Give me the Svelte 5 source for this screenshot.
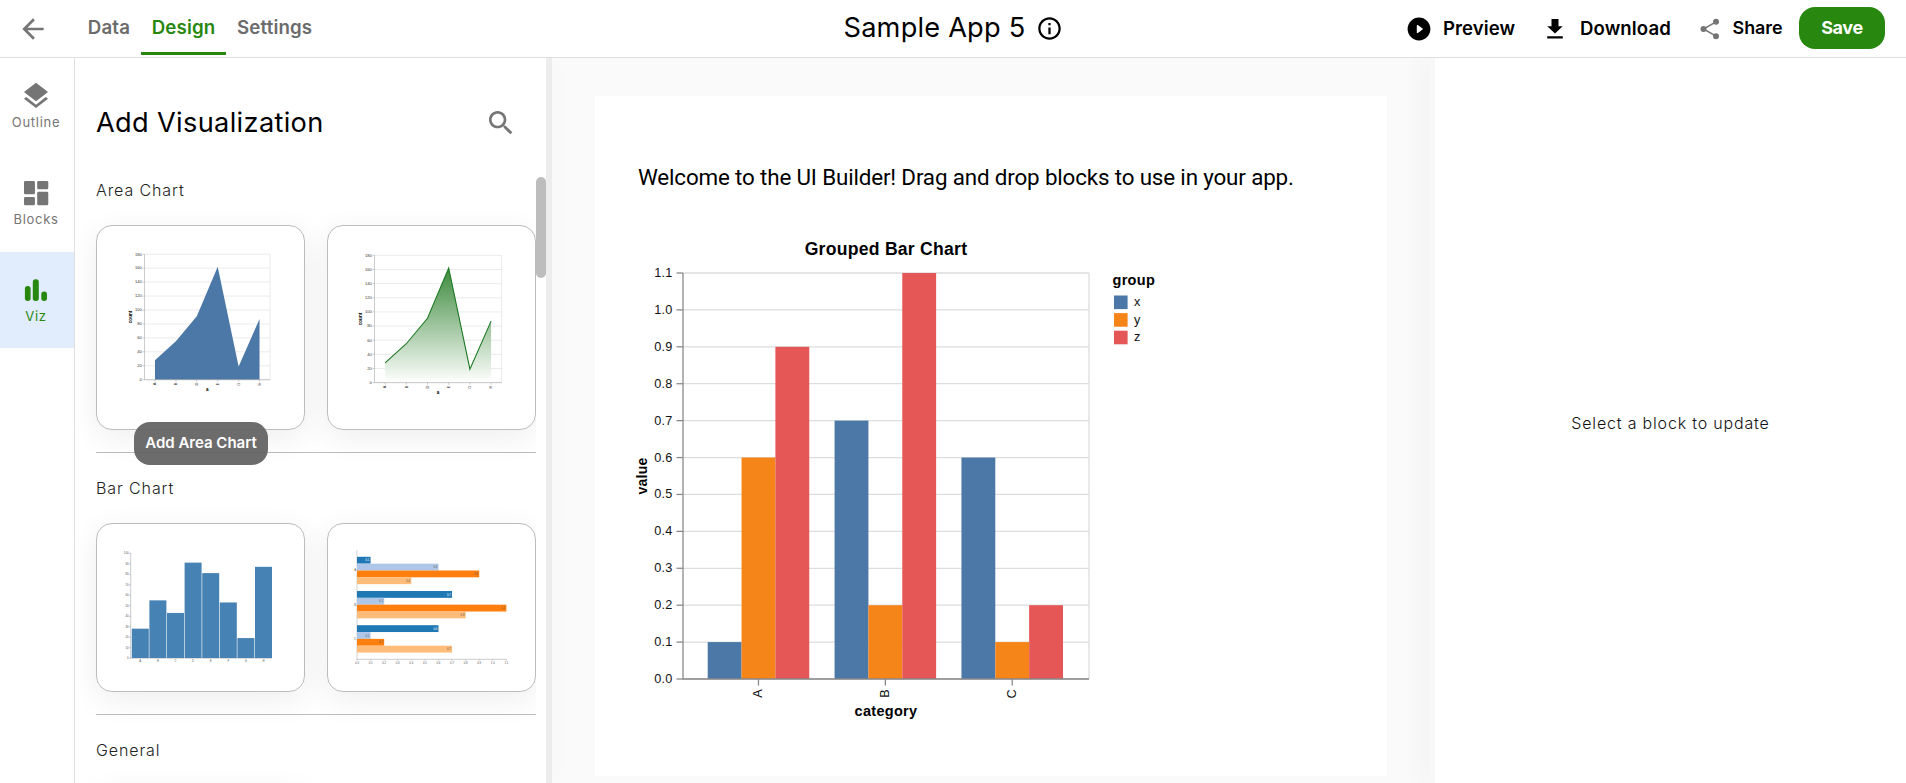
<script>
  const yTicks = Array.from({ length: 12 }, (_, i) => i / 10);
  const groups = [
    { name: 'A', values: [0.1, 0.6, 0.9] },
    { name: 'B', values: [0.7, 0.2, 1.1] },
    { name: 'C', values: [0.6, 0.1, 0.2] }
  ];
  const colors = ['#4c78a8', '#f58518', '#e45756'];
  const plot = { x: 45, y: 37, size: 406 };
  const step = plot.size / 11;
  const band = plot.size / 3.2;
  const bar = 33.85;

  const areaValues = [28, 55, 91, 162, 19, 87];
  const areaNames = ['A', 'B', 'D', 'E', 'G', 'H'];
  const areaTicks = Array.from({ length: 10 }, (_, i) => i * 20);
  const areas = [
    { id: 'solid', x: 47.5, y: 28.2, size: 125.5 },
    { id: 'gradient', x: 46.5, y: 29.4, size: 127.2 }
  ];
  function areaLine(a) {
    return areaValues
      .map((v, i) => `${a.x + (a.size / 12) * (2 * i + 1)},${a.y + a.size - (v / 180) * a.size}`)
      .join(' ');
  }
  function areaShape(a) {
    const base = a.y + a.size;
    return `${a.x + a.size / 12},${base} ${areaLine(a)} ${a.x + (a.size * 11) / 12},${base}`;
  }

  const barValues = [28, 55, 43, 91, 81, 53, 19, 87];
  const rows = [
    { name: 'A', values: [0.1, 0.6, 0.9, 0.4] },
    { name: 'B', values: [0.7, 0.2, 1.1, 0.8] },
    { name: 'C', values: [0.6, 0.1, 0.2, 0.7] }
  ];
  const rowColors = ['#1f77b4', '#aec7e8', '#ff7f0e', '#ffbb78'];
</script>

<div class="app">
  <header>
    <div class="nav">
      <svg class="back" viewBox="0 0 24 24"><path d="M20 11H7.83l5.59-5.59L12 4l-8 8 8 8 1.41-1.41L7.83 13H20v-2z" /></svg>
      <nav>
        <span>Data</span>
        <span class="active">Design</span>
        <span>Settings</span>
      </nav>
    </div>
    <div class="name">
      <h1>Sample App 5</h1>
      <svg viewBox="0 0 24 24"><path d="M11 7h2v2h-2zm0 4h2v6h-2zm1-9C6.48 2 2 6.48 2 12s4.48 10 10 10 10-4.48 10-10S17.52 2 12 2zm0 18c-4.41 0-8-3.59-8-8s3.59-8 8-8 8 3.590 8 8-3.590 8-8 8z" /></svg>
    </div>
    <div class="actions">
      <div class="action preview">
        <svg viewBox="0 0 24 24"><circle cx="12" cy="12" r="11.4" /><path d="M9.8 8.600c0-.6.6-.8 1-.5l4.800 3.300c.4.3.4.9 0 1.200l-4.800 3.300c-.4.3-1 .1-1-.5z" fill="#fff" /></svg>
        <span>Preview</span>
      </div>
      <div class="action download">
        <svg viewBox="0 0 24 24"><path d="M8.500 2h7v7.200h4.200L12 16.500 4.300 9.200h4.200zM4.200 19.300h15.600v2.300H4.200z" /></svg>
        <span>Download</span>
      </div>
      <div class="action share">
        <svg viewBox="0 0 24 24"><g fill="#757575"><circle cx="5.500" cy="12" r="3" /><circle cx="18" cy="4.800" r="3" /><circle cx="18" cy="19.200" r="3" /></g><path d="M18 4.800 5.500 12 18 19.200" fill="none" stroke="#757575" stroke-width="1.500" /></svg>
        <span>Share</span>
      </div>
      <button>Save</button>
    </div>
  </header>

  <main>
    <aside class="rail">
      <div class="item">
        <svg viewBox="0 0 24 24"><path d="M11.990 18.540l-7.370-5.730L3 14.070l9 7 9-7-1.630-1.270-7.380 5.740zM12 16l7.360-5.730L21 9l-9-7-9 7 1.630 1.270L12 16z" /></svg>
        <span>Outline</span>
      </div>
      <div class="item">
        <svg viewBox="0 0 24 24"><rect x="3" y="3" width="8.200" height="10" rx="1" /><rect x="12.900" y="3" width="8.300" height="6.200" rx="1" /><rect x="3" y="15" width="8.200" height="6.200" rx="1" /><rect x="12.900" y="11" width="8.300" height="10.200" rx="1" /></svg>
        <span>Blocks</span>
      </div>
      <div class="item selected">
        <svg viewBox="0 0 32 32"><rect x="4.900" y="12" width="5.700" height="15" rx="2.700" /><rect x="12.800" y="5.300" width="6" height="21.700" rx="2.700" /><rect x="21.300" y="17.600" width="5.700" height="9.400" rx="2.700" /></svg>
        <span>Viz</span>
      </div>
    </aside>

    <section class="library">
      <div class="head">
        <h2>Add Visualization</h2>
        <svg viewBox="0 0 24 24"><path d="M15.500 14h-.79l-.28-.27C15.410 12.590 16 11.110 16 9.500 16 5.910 13.090 3 9.500 3S3 5.910 3 9.500 5.910 16 9.500 16c1.610 0 3.090-.59 4.230-1.570l.27.28v.79l5 4.990L20.490 19l-4.990-5zm-6 0C7.010 14 5 11.990 5 9.500S7.010 5 9.500 5 14 7.010 14 9.500 11.990 14 9.500 14z" /></svg>
      </div>
      <div class="list">
        <div class="scroll">
          <h3>Area Chart</h3>
          <div class="cards tall">
            {#each areas as a}
              <div class="card">
                <svg class="mini" viewBox="0 0 207 203">
                  <defs>
                    <linearGradient id="fade" x1="0" y1="1" x2="0" y2="0">
                      <stop offset="0" stop-color="#fff" />
                      <stop offset="1" stop-color="#3d8a3d" />
                    </linearGradient>
                  </defs>
                  {#each areaTicks as t}
                    {@const y = a.y + a.size - (t / 180) * a.size}
                    <path class="grid" d="M{a.x} {y}h{a.size}" />
                    <path class="tick" d="M{a.x - 2} {y}h2" />
                    <text x={a.x - 2.800} y={y + 1.300} text-anchor="end">{t}</text>
                  {/each}
                  <path class="grid" d="M{a.x + a.size} {a.y}v{a.size}" />
                  {#if a.id === 'solid'}
                    <polygon points={areaShape(a)} fill="#4c78a8" />
                  {:else}
                    <polygon points={areaShape(a)} fill="url(#fade)" />
                    <polyline points={areaLine(a)} fill="none" stroke="#1d7a24" stroke-width="1.100" />
                  {/if}
                  <path class="tick" d="M{a.x} {a.y}v{a.size}h{a.size}" />
                  {#each areaNames as n, i}
                    {@const x = a.x + (a.size / 12) * (2 * i + 1)}
                    <path class="tick" d="M{x} {a.y + a.size}v2" />
                    <text transform="translate({x + 1.300} {a.y + a.size + 3}) rotate(-90)" text-anchor="end">{n}</text>
                  {/each}
                  <text class="bold" x={a.x + a.size / 2} y={a.y + a.size + 11.500} text-anchor="middle">a</text>
                  <text class="bold" transform="translate({a.x - 12.500} {a.y + a.size / 2}) rotate(-90)" text-anchor="middle">count</text>
                </svg>
                {#if a.id === 'solid'}<div class="tip">Add Area Chart</div>{/if}
              </div>
            {/each}
          </div>
          <hr />
          <h3>Bar Chart</h3>
          <div class="cards">
            <div class="card">
              <svg class="mini tiny" viewBox="0 0 207 167">
                <path class="tick" d="M33.700 29.300V134.200H175" />
                {#each Array(11) as _, i}
                  <path class="tick" d="M32 {134.200 - i * 10.480}h2" />
                  <text x="31.500" y={135.200 - i * 10.480} text-anchor="end">{i * 10}</text>
                {/each}
                {#each barValues as v, i}
                  <rect x={34.800 + i * 17.600} y={134 - v * 1.048} width="17" height={v * 1.048} fill="#4682b4" />
                  <text x={43.300 + i * 17.600} y="138" text-anchor="middle">{'ABCDEFGH'[i]}</text>
                {/each}
              </svg>
            </div>
            <div class="card">
              <svg class="mini tiny" viewBox="0 0 207 167">
                <path d="M29 26v109.300" stroke="#ddd" stroke-width="1.300" />
                <path class="tick" d="M29 135.300h149.600" />
                {#each yTicks as t}
                  <path class="tick" d="M{29 + t * 135.800} 135v1.500" />
                  <text x={29 + t * 135.800} y="139.600" text-anchor="middle">{t.toFixed(1)}</text>
                {/each}
                {#each rows as r, g}
                  <text x="28" y={47.400 + g * 34.200} text-anchor="end">{r.name}</text>
                  {#each r.values as v, i}
                    <rect x="29" y={32.800 + g * 34.200 + i * 6.840} width={v * 135.800} height="6.840" fill={rowColors[i]} />
                    <text x={27.800 + v * 135.800} y={37.400 + g * 34.200 + i * 6.840} text-anchor="end" class:light={i === 0}>{v.toFixed(1)}</text>
                  {/each}
                {/each}
              </svg>
            </div>
          </div>
          <hr />
          <h3>General</h3>
          <div class="cards"><div class="card"></div></div>
        </div>
        <div class="track"><div class="thumb"></div></div>
      </div>
    </section>

    <div class="divider left"></div>

    <section class="canvas">
      <article>
        <p>Welcome to the UI Builder! Drag and drop blocks to use in your app.</p>
        <svg class="chart" width="540" height="500" viewBox="0 0 540 500">
          <text class="heading" x={plot.x + plot.size / 2} y="18.700" text-anchor="middle">Grouped Bar Chart</text>
          {#each yTicks as t, i}
            {@const y = plot.y + plot.size - i * step}
            <path d="M{plot.x} {y}h{plot.size}" stroke="#ddd" stroke-width="1.270" />
            <path d="M{plot.x - 6.500} {y}h6.500" stroke="#888" stroke-width="1.270" />
            <text x={plot.x - 10.500} y={y + 4} text-anchor="end">{t.toFixed(1)}</text>
          {/each}
          <path d="M{plot.x + plot.size} {plot.y}v{plot.size}" stroke="#ddd" stroke-width="1.270" />
          {#each groups as g, gi}
            {@const gx = plot.x + 24.700 + gi * band}
            {#each g.values as v, i}
              <rect x={gx + i * bar} y={plot.y + plot.size - v * 10 * step} width={bar} height={v * 10 * step} fill={colors[i]} />
            {/each}
            <path d="M{gx + bar * 1.500} {plot.y + plot.size}v6.500" stroke="#888" stroke-width="1.270" />
            <text transform="translate({gx + bar * 1.500 + 3.500} {plot.y + plot.size + 10}) rotate(-90)" text-anchor="end">{g.name}</text>
          {/each}
          <path d="M{plot.x} {plot.y}v{plot.size}h{plot.size}" fill="none" stroke="#888" stroke-width="1.270" />
          <text class="title" x={plot.x + plot.size / 2} y="480" text-anchor="middle">category</text>
          <text class="title side" transform="translate(9 240) rotate(-90)" text-anchor="middle">value</text>
          <text class="title" x="474.500" y="49">group</text>
          {#each ['x', 'y', 'z'] as n, i}
            <rect x="476" y={59.500 + i * 17.600} width="13.600" height="13.600" fill={colors[i]} />
            <text x="496" y={70 + i * 17.600}>{n}</text>
          {/each}
        </svg>
      </article>
    </section>

    <div class="divider right"></div>
    <aside class="inspector">Select a block to update</aside>
  </main>
</div>

<style>
  :global(body) { background: #fff; overflow: hidden; }
  .app { height: 783px; display: flex; flex-direction: column; font-family: Inter, 'Noto Sans', sans-serif; color: #000; }
  h1, h2, h3, p { margin: 0; font-weight: 400; white-space: nowrap; }
  svg { display: block; flex: none; }
  header { height: 57px; flex: none; border-bottom: 1px solid #dfdfdf; display: grid; grid-template-columns: 843.500px 1fr 499px; }
  .nav { display: flex; align-items: center; padding-left: 17px; }
  .back { width: 32px; fill: #757575; margin-right: 28px; }
  nav { display: flex; align-self: stretch; }
  nav span { height: 52px; line-height: 55px; padding: 0 10.800px; font-size: 18.700px; font-weight: 570; letter-spacing: .15px; color: #6b6b6b; border-bottom: 3px solid transparent; }
  nav .active { color: #27870f; border-color: #27870f; }
  .name { display: flex; align-items: center; gap: 11px; }
  h1 { font-size: 27.200px; letter-spacing: .2px; line-height: 54px; margin-top: -1px; }
  .name svg { width: 27px; }
  .actions { display: flex; align-items: center; font-size: 18.600px; font-weight: 570; }
  .action { display: flex; align-items: center; gap: 12px; }
  .action svg { width: 24px; height: 24px; }
  .action span { line-height: 22px; margin-top: -1px; }
  .preview { width: 136px; letter-spacing: .05px; }
  .download { width: 155px; gap: 13px; letter-spacing: .1px; }
  .share { width: 102px; gap: 10.500px; font-size: 17.900px; }
  .preview, .download, .share { flex: none; }
  button { margin: -2px 0 0 -1px; width: 86px; height: 42px; border: 0; border-radius: 16px; background: #27870f; color: #fff; font: 700 18px/42px Inter, sans-serif; padding: 0; letter-spacing: -.4px; }

  main { flex: 1; min-height: 0; display: flex; }
  .rail { width: 74px; flex: none; border-right: 1px solid #dfdfdf; display: flex; flex-direction: column; gap: 1px; }
  .item { height: 96px; display: flex; flex-direction: column; align-items: center; padding-top: 22px; box-sizing: border-box; font-size: 13px; line-height: 16px; letter-spacing: .7px; color: #757575; padding-right: 2px; }
  .item svg { width: 32px; height: 32px; fill: #757575; margin-bottom: 2px; }
  .selected { background: #e1edfd; color: #27870f; }
  .selected svg { fill: #27870f; }

  .library { width: 471px; flex: none; display: flex; flex-direction: column; background: #fff; }
  .head { height: 119px; box-sizing: border-box; padding: 11px 29px 0 21px; display: flex; align-items: center; justify-content: space-between; }
  .head svg { width: 32px; fill: #757575; }
  h2 { font-size: 27.200px; letter-spacing: .33px; margin-top: -2px; }
  .list { flex: 1; min-height: 0; display: flex; }
  .scroll { width: 461px; padding-left: 21px; box-sizing: border-box; overflow: hidden; }
  h3 { font-size: 16px; font-weight: 350; letter-spacing: .9px; line-height: 20px; color: #222; margin: 3px 0 25px; }
  .cards { display: flex; gap: 22px; }
  .card { position: relative; width: 209px; height: 169px; box-sizing: border-box; border: 1px solid #bdbdbd; border-radius: 16px; background: #fff; box-shadow: 0 8px 32px rgba(0, 0, 0, .07); }
  .tall .card { height: 205px; }
  hr { border: 0; height: 1px; background: #bdbdbd; margin: 22px 0 25px; }
  .tip { position: absolute; left: 37px; top: 196px; width: 134px; height: 43px; border-radius: 16px; background: rgba(97, 97, 97, .93); color: #fff; font-size: 15px; font-weight: 600; line-height: 42px; text-align: center; white-space: nowrap; z-index: 1; }
  .track { width: 10px; }
  .thumb { height: 101px; border-radius: 5px; background: #bdbdbd; }

  .mini { width: 100%; height: 100%; }
  .mini text { font: 4px 'Liberation Sans', sans-serif; fill: #333; }
  .tiny text { font-size: 2.800px; fill: #555; }
  .tiny .light { fill: #fff; }
  .mini .bold { font-weight: 700; font-size: 4.600px; fill: #000; }
  .grid { stroke: #ddd; stroke-width: .6; fill: none; }
  .tick { stroke: #aaa; stroke-width: .6; fill: none; }

  .divider { width: 6px; flex: none; }
  .left { background: #ededed; box-shadow: 2px 0 24px rgba(0, 0, 0, .03); z-index: 1; clip-path: inset(0 -50px 0 0); }
  .right { background: #f8f8f8; box-shadow: -2px 0 24px rgba(0, 0, 0, .1); z-index: 1; clip-path: inset(0 0 0 -42px); }
  .canvas { width: 877px; flex: none; background: #fafafa; box-sizing: border-box; padding: 38px 42px 0 43px; }
  article { height: 680px; box-sizing: border-box; background: #fff; padding: 64px 43px 0; }
  p { font: 22.400px/34px Roboto, sans-serif; letter-spacing: -.16px; }
  .chart { margin-top: 42px; overflow: visible; }
  .chart text { font: 12.690px 'Liberation Sans', sans-serif; fill: #111; letter-spacing: .2px; }
  .chart .title { font-weight: 700; font-size: 14.500px; fill: #000; letter-spacing: .3px; }
  .chart .side { font-size: 14px; letter-spacing: .2px; }
  .chart .heading { font-weight: 700; font-size: 17.600px; fill: #000; letter-spacing: .25px; }
  .inspector { flex: 1; display: flex; align-items: center; justify-content: center; font-size: 16px; font-weight: 350; letter-spacing: .82px; color: #111; padding-top: 5px; background: #fff; }
</style>
